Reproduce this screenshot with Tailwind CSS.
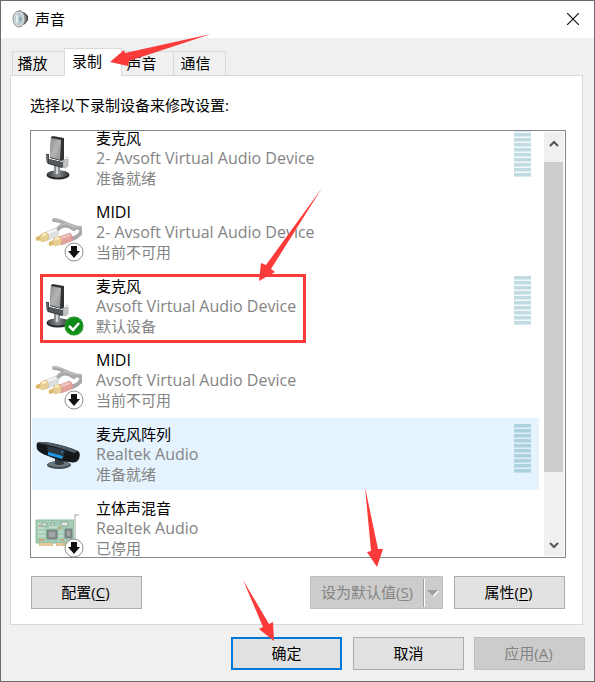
<!DOCTYPE html>
<html lang="zh-CN">
<head>
    <meta charset="UTF-8">
    <meta name="viewport" content="width=device-width, initial-scale=1.0">
    <title>声音</title>
    <script src="https://cdn.jsdelivr.net/npm/@tailwindcss/browser@4"></script>
    <style>
        body {
            font-family: "Open Sans", "Noto Sans CJK SC", sans-serif;
        }
    </style>
</head>
<body class="min-h-screen bg-[#f0f0f0] text-black">
    <!-- Shared icons -->
    <svg class="absolute size-0" aria-hidden="true">
        <defs>
            <linearGradient id="mesh" x1="0" y1="0" x2="1" y2="1">
                <stop offset="0" stop-color="#8d8d8d"/>
                <stop offset=".5" stop-color="#b4b4b4"/>
                <stop offset="1" stop-color="#909090"/>
            </linearGradient>
            <linearGradient id="base" x1="0" y1="0" x2="1" y2="0">
                <stop offset="0" stop-color="#3a3e41"/>
                <stop offset=".5" stop-color="#85898c"/>
                <stop offset="1" stop-color="#333639"/>
            </linearGradient>
            <symbol id="mic" viewBox="0 0 48 48">
                <ellipse cx="24" cy="40" rx="11.500" ry="4.500" fill="#222426"/>
                <ellipse cx="24" cy="39" rx="11" ry="3.500" fill="url(#base)"/>
                <path d="M20 30h6v9q-3 1-6 0z" fill="#8c9092"/>
                <path d="M22 30h2v9h-2z" fill="#d5d7d8"/>
                <path d="M17 2L19 1L30 3V25L27 26L16 23z" fill="#303336"/>
                <path d="M17 3L27 5L26 25L16 22z" fill="url(#mesh)"/>
                <path d="M12 19H15V24L28 27L31 25V31L28 33L14 29Q12 27 12 19z" fill="#3f4346"/>
                <path d="M15 24L28 27V32L15 28z" fill="#54585b"/>
                <path d="M13 20V27" stroke="#888d90"/>
                <path d="M29 25L34 24V31L31 33L29 32z" fill="#c1c4c6" stroke="#8f9295" stroke-width=".5"/>
                <path d="M31 23L34 22V26" fill="none" stroke="#d0d2d4"/>
            </symbol>
            <symbol id="plugs" viewBox="0 0 48 48">
                <g fill="none" stroke="#a9a9a9" stroke-width="4" stroke-linecap="round">
                    <path d="M20 11C29 11 33 18 46 19C50 23 44 28 38 30"/>
                    <path d="M24 20C28 15 33 15 40 20"/>
                </g>
                <path d="M20 10C29 10 33 17 45 18M26 17C30 14 34 14 39 18" fill="none" stroke="#c4c4c4"/>
                <path d="M12 23L22 19Q26 22 24 26L14 31Q10 29 12 23z" fill="#dedfe3" stroke="#b9babf" stroke-width=".5"/>
                <path d="M13 24L22 21" stroke="#f8f8fa" stroke-width="2"/>
                <path d="M2 28L8 26L10 30L4 32Q1 31 2 28z" fill="#dfb96c"/>
                <path d="M7 25L12 23Q16 26 14 31L8 33Q4 30 7 25z" fill="#e8cf96" stroke="#cfaa66" stroke-width=".5"/>
                <path d="M8 26L12 25" stroke="#fff1c7" stroke-width="2"/>
                <path d="M25 28L36 24Q40 27 38 32L27 36Q23 34 25 28z" fill="#e2a19c" stroke="#cd8985" stroke-width=".5"/>
                <path d="M27 29L36 26" stroke="#f0c8c4" stroke-width="2"/>
                <path d="M15 33L20 31L22 35L16 37Q14 36 15 33z" fill="#dfb96c"/>
                <path d="M20 29L25 27Q29 30 27 35L21 37Q17 34 20 29z" fill="#e8cf96" stroke="#cfaa66" stroke-width=".5"/>
                <path d="M21 30L25 29" stroke="#fff1c7" stroke-width="2"/>
            </symbol>
            <symbol id="array" viewBox="0 0 48 48">
                <ellipse cx="25" cy="34" rx="12" ry="4" fill="#444c52"/>
                <ellipse cx="25" cy="33" rx="11" ry="3" fill="#6c767d"/>
                <path d="M21 26H29L30 33Q25 35 21 33z" fill="#343b41"/>
                <path d="M3 12Q4 10 17 12Q33 15 44 20Q47 22 45 28Q42 33 36 31Q28 31 14 25Q5 22 3 18Q2 15 3 12z" fill="#15181b"/>
                <path d="M4 11Q20 10 44 20L40 22Q22 15 4 12z" fill="#505a62"/>
                <path d="M13 15L31 19L29 28L14 24z" fill="#2b3741"/>
                <path d="M14 21L29 25L28 28L14 24z" fill="#2196e3"/>
                <path d="M27 21H29" stroke="#38a7ee"/>
            </symbol>
            <symbol id="card" viewBox="0 0 48 48">
                <path d="M2 15h38v23H2z" fill="#a5cdb6" stroke="#8eb9a0"/>
                <path d="M5 38h14v3H5zM22 38h12v3H22z" fill="#dfbd86"/>
                <path d="M7 38v3m2-3v3m2-3v3m2-3v3m2-3v3m2-3v3m7-3v3m2-3v3m2-3v3" stroke="#f3ddb4" stroke-width=".7"/>
                <path d="M41 42V10h4" fill="none" stroke="#cfd1d0" stroke-width="2"/>
                <path d="M13 25h10v9H13zM31 24h7v9h-7z" fill="#858e8a" stroke="#68736d" stroke-width=".7"/>
                <path d="M15 27h6v5h-6zM33 26h3v5h-3z" fill="#a0a7a4"/>
                <path d="M8 18h5v3H8zM17 18h3v3h-3zM27 17h7v4h-7z" fill="#e3e7e4" stroke="#7f9988" stroke-width=".8"/>
                <path d="M4 19h3M4 23h6M4 27h7M4 31h7M15 22h8M25 27h4M25 31h4" stroke="#dcebe1"/>
                <path d="M5 21h2M24 23h3M5 35h5M27 35h3" stroke="#c8a475" stroke-width="2"/>
            </symbol>
            <symbol id="down-badge" viewBox="0 0 20 20">
                <circle cx="10" cy="10" r="9" fill="#fff" stroke="#8d8d8d"/>
                <path d="M7 4h6v5h3l-6 7-6-7h3z" fill="#111"/>
            </symbol>
            <symbol id="ok-badge" viewBox="0 0 20 20">
                <circle cx="10" cy="10" r="9.500" fill="#108a16"/>
                <circle cx="10" cy="10" r="8.500" fill="none" stroke="#24a22b"/>
                <path d="M5 10l4 4 6-7" fill="none" stroke="#fff" stroke-width="2.500"/>
            </symbol>
        </defs>
    </svg>

    <div class="relative flex min-h-screen flex-col border border-[#6b6b6b] bg-[#f0f0f0] text-[15px] leading-5">
        <!-- Title bar -->
        <header class="flex h-[37px] items-center justify-between bg-white pr-[11px] pb-px pl-[11px]">
            <div class="flex items-center gap-[7px]">
                <svg class="h-[18px] w-4" viewBox="0 0 16 18">
                    <path d="M7 0l6 3 3 3v4l-3 4-6 3z" fill="#454545"/>
                    <path d="M11 3l3 4v3l-3 4" fill="none" stroke="#999"/>
                    <ellipse cx="7" cy="9" rx="6" ry="8" fill="#e1e1e1" stroke="#8c8c8c"/>
                    <ellipse cx="7" cy="9" rx="4.500" ry="6.500" fill="#b9cbd2"/>
                    <path d="M4 4l4 5-4 5z" fill="#e6eff2"/>
                    <ellipse cx="8" cy="9" rx="1.500" ry="2.500" fill="#8faab5"/>
                </svg>
                <h1>声音</h1>
            </div>
            <button aria-label="关闭" class="flex size-5 items-center justify-center">
                <svg class="size-3" viewBox="0 0 12 12" fill="none" stroke="#111" stroke-width="1.200"><path d="M0 0l12 12M12 0L0 12"/></svg>
            </button>
        </header>

        <main class="flex flex-col px-[9px] pt-[10px]">
            <!-- Tabs -->
            <div role="tablist" class="flex h-[27px] items-end pl-[2px]">
                <button role="tab" class="h-6 w-[52px] border border-r-0 border-b-0 border-[#d9d9d9] pr-3 pb-px">播放</button>
                <button role="tab" aria-selected="true" class="relative -mb-px h-7 w-[58px] border border-b-0 border-[#d9d9d9] bg-white pr-3 pb-1">录制</button>
                <button role="tab" class="h-6 w-[52px] border border-b-0 border-l-0 border-[#d9d9d9] pr-3 pb-px">声音</button>
                <button role="tab" class="h-6 w-[52px] border border-b-0 border-l-0 border-[#d9d9d9] pr-2 pb-px">通信</button>
            </div>

            <section class="mr-[2px] border border-[#d9d9d9] bg-white pt-[19px] pr-4 pb-[15px] pl-[19px]">
                <p class="mb-[15px]">选择以下录制设备来修改设置:</p>

                <!-- Device list -->
                <div class="flex h-[428px] border border-[#828790]">
                    <div class="min-w-0 flex-1 overflow-hidden pl-px">
                        <ul class="-mt-[9px] text-[#848484]">
                            <li class="mb-[2px] flex h-[72px] pt-[6px] pr-2 pl-[2px]">
                                <div class="relative mr-[14px] h-[60px] w-12 shrink-0">
                                    <svg class="mt-[7px] size-12"><use href="#mic"/></svg>
                                </div>
                                <div class="flex-1">
                                    <p class="text-black">麦克风</p>
                                    <p class="text-base leading-5">2- Avsoft Virtual Audio Device</p>
                                    <p>准备就绪</p>
                                </div>
                                <div class="h-[49px] w-[17px] bg-[repeating-linear-gradient(to_bottom,#c0dbe2_0_3px,#d8eaed_3px_4px,#f5fafb_4px_5px)]"></div>
                            </li>
                            <li class="mb-[2px] flex h-[72px] pt-[6px] pr-2 pl-[2px]">
                                <div class="relative mr-[14px] h-[60px] w-12 shrink-0">
                                    <svg class="mt-[7px] size-12"><use href="#plugs"/></svg>
                                    <svg class="absolute -right-[2px] bottom-0 size-5"><use href="#down-badge"/></svg>
                                </div>
                                <div class="flex-1">
                                    <p class="text-base leading-5 text-black">MIDI</p>
                                    <p class="text-base leading-5">2- Avsoft Virtual Audio Device</p>
                                    <p>当前不可用</p>
                                </div>
                            </li>
                            <li class="mb-[2px] flex h-[72px] pt-[6px] pr-2 pl-[2px]">
                                <div class="relative mr-[14px] h-[60px] w-12 shrink-0">
                                    <svg class="mt-[7px] size-12"><use href="#mic"/></svg>
                                    <svg class="absolute -right-[2px] bottom-0 size-5"><use href="#ok-badge"/></svg>
                                </div>
                                <div class="flex-1">
                                    <p class="text-black">麦克风</p>
                                    <p class="text-base leading-5">Avsoft Virtual Audio Device</p>
                                    <p>默认设备</p>
                                </div>
                                <div class="h-[49px] w-[17px] bg-[repeating-linear-gradient(to_bottom,#c0dbe2_0_3px,#d8eaed_3px_4px,#f5fafb_4px_5px)]"></div>
                            </li>
                            <li class="mb-[2px] flex h-[72px] pt-[6px] pr-2 pl-[2px]">
                                <div class="relative mr-[14px] h-[60px] w-12 shrink-0">
                                    <svg class="mt-[7px] size-12"><use href="#plugs"/></svg>
                                    <svg class="absolute -right-[2px] bottom-0 size-5"><use href="#down-badge"/></svg>
                                </div>
                                <div class="flex-1">
                                    <p class="text-base leading-5 text-black">MIDI</p>
                                    <p class="text-base leading-5">Avsoft Virtual Audio Device</p>
                                    <p>当前不可用</p>
                                </div>
                            </li>
                            <li class="mb-[2px] flex h-[72px] bg-[#e5f3ff] pt-[6px] pr-2 pl-[2px]">
                                <div class="relative mr-[14px] h-[60px] w-12 shrink-0">
                                    <svg class="mt-[7px] size-12"><use href="#array"/></svg>
                                </div>
                                <div class="flex-1">
                                    <p class="text-black">麦克风阵列</p>
                                    <p class="text-base leading-5">Realtek Audio</p>
                                    <p>准备就绪</p>
                                </div>
                                <div class="h-[49px] w-[17px] bg-[repeating-linear-gradient(to_bottom,#aed1df_0_3px,#c4e0eb_3px_4px,#dff0fa_4px_5px)]"></div>
                            </li>
                            <li class="flex h-[72px] pt-[6px] pr-2 pl-[2px]">
                                <div class="relative mr-[14px] h-[60px] w-12 shrink-0">
                                    <svg class="mt-[7px] size-12"><use href="#card"/></svg>
                                    <svg class="absolute -right-[2px] bottom-0 size-5"><use href="#down-badge"/></svg>
                                </div>
                                <div class="flex-1">
                                    <p class="text-black">立体声混音</p>
                                    <p class="text-base leading-5">Realtek Audio</p>
                                    <p>已停用</p>
                                </div>
                            </li>
                        </ul>
                    </div>
                    <!-- Scrollbar -->
                    <div class="my-px mr-px ml-[5px] flex w-5 flex-col bg-[#f0f0f0]">
                        <button aria-label="向上滚动" class="flex h-[30px] items-center justify-center pr-px pb-2">
                            <svg class="h-[7px] w-[10px]" viewBox="0 0 10 7" fill="none" stroke="#555" stroke-width="2"><path d="M1 6l4-4 4 4"/></svg>
                        </button>
                        <div class="mr-px h-[310px] bg-[#cdcdcd]"></div>
                        <button aria-label="向下滚动" class="mt-auto flex h-[22px] items-center justify-center pr-px">
                            <svg class="h-[7px] w-[10px]" viewBox="0 0 10 7" fill="none" stroke="#555" stroke-width="2"><path d="M1 1l4 4 4-4"/></svg>
                        </button>
                    </div>
                </div>

                <!-- Device actions -->
                <div class="mt-[18px] mr-px ml-px flex">
                    <button class="h-[33px] w-[111px] border border-[#adadad] bg-[#e1e1e1] pr-[2px] pb-[2px]">配置(<u class="underline-offset-2">C</u>)</button>
                    <div class="mr-[11px] ml-auto flex h-[33px] w-[133px] items-center border border-[#bfbfbf] bg-[#cccccc] text-[#838383]">
                        <button disabled class="h-full flex-1 pb-[2px]">设为默认值(<u class="underline-offset-2">S</u>)</button>
                        <button disabled aria-label="更多选项" class="flex h-7 w-[19px] items-center justify-center border-l border-[#a0a0a0] pt-[2px] shadow-[inset_1px_0_0_#fff]">
                            <svg class="h-[7px] w-3" viewBox="0 0 12 7"><path d="M1 1h11L6.500 7z" fill="#fff"/><path d="M0 0h11L5.500 6z" fill="#a0a0a0"/></svg>
                        </button>
                    </div>
                    <button class="h-[33px] w-[111px] border border-[#adadad] bg-[#e1e1e1] pr-[2px] pb-[2px]">属性(<u class="underline-offset-2">P</u>)</button>
                </div>
            </section>

            <!-- Dialog buttons -->
            <footer class="mt-3 flex justify-end gap-[11px] pb-[11px]">
                <button class="h-[33px] w-[111px] border-2 border-[#0078d7] bg-[#e1e1e1] pb-[2px]">确定</button>
                <button class="h-[33px] w-[111px] border border-[#adadad] bg-[#e1e1e1] pb-[2px]">取消</button>
                <button disabled class="-ml-px h-[33px] w-[111px] border border-[#bfbfbf] bg-[#cccccc] pr-[2px] pb-[2px] text-[#838383]">应用(<u class="underline-offset-2">A</u>)</button>
            </footer>
        </main>

        <!-- Callouts -->
        <svg class="pointer-events-none absolute -top-px -left-px" width="595" height="682" viewBox="0 0 595 682" fill="#fb3b3a" aria-hidden="true">
            <path d="M211 34L129 61L128 66L110 62L124 50L125 53z"/>
            <path d="M322 188L271 269L275 272L259 281L261 263L266 265z"/>
            <path d="M365 487L378 549L383 549L377 567L367 552L371 551z"/>
            <path d="M243 580L269 624L273 622L274 641L259 629L263 627z"/>
            <path d="M41.500 275.500h263v66h-263z" fill="none" stroke="#fb3b3a" stroke-width="3"/>
        </svg>
    </div>
</body>
</html>
